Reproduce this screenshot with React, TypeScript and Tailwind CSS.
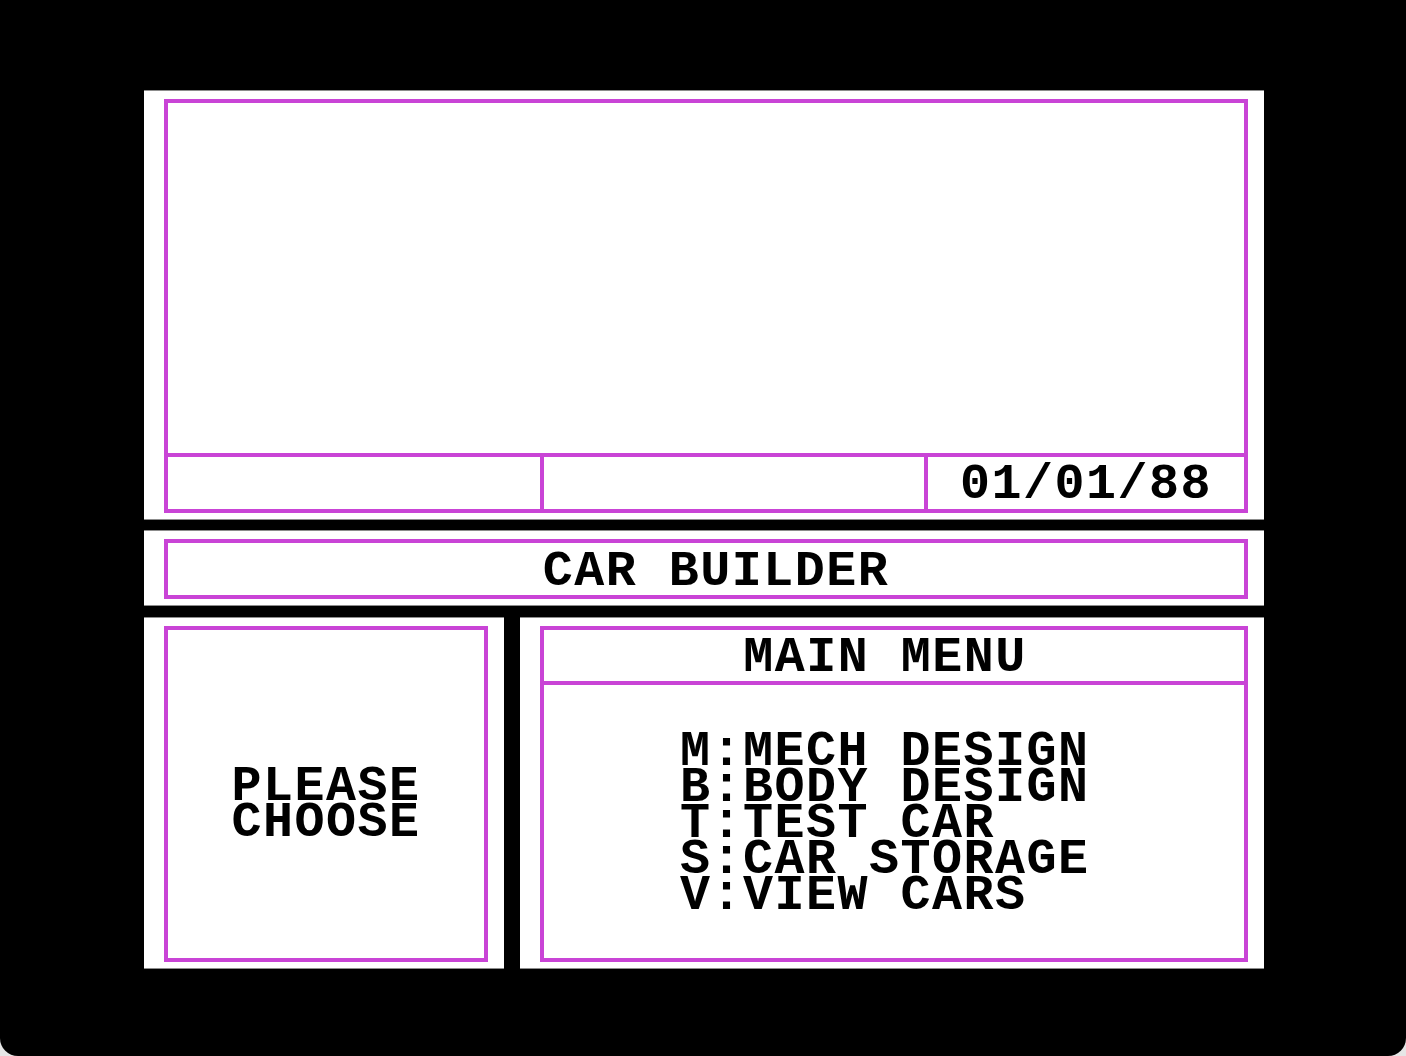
const font = "font-['Liberation_Mono',monospace] font-bold text-[50px] tracking-[1.5px] leading-[36px] text-black uppercase";

const menuItems = [
  ["M", "MECH DESIGN"],
  ["B", "BODY DESIGN"],
  ["T", "TEST CAR"],
  ["S", "CAR STORAGE"],
  ["V", "VIEW CARS"],
];

// white card with the purple frame inset inside it
function Panel({ className = "", frame = "", children }: { className?: string; frame?: string; children?: React.ReactNode }) {
  return (
    <div className={`border-t border-b border-[#8c8c8c] bg-white pt-[8px] pb-[6px] pl-[20px] pr-[16px] ${className}`}>
      <div className={`h-full border-4 border-[#c944d6] ${frame}`}>{children}</div>
    </div>
  );
}

export default function App() {
  return (
    <div className="h-[1056px] w-[1406px] bg-[#e6e6e6]">
      <div className="h-full w-full rounded-b-[18px] bg-black pl-[144px] pt-[90px]">
        <div className="flex w-[1120px] flex-col">
          {/* monitor area with status strip */}
          <Panel className="h-[430px]" frame="flex flex-col">
            <div className="flex-1" />
            <div className="flex h-[56px] border-t-4 border-[#c944d6]">
              <div className="w-[376px] border-r-4 border-[#c944d6]" />
              <div className="w-[384px] border-r-4 border-[#c944d6]" />
              <div className={`flex flex-1 items-center pl-[32px] pt-[4px] ${font}`}>01/01/88</div>
            </div>
          </Panel>

          <div className="h-[10px]" />

          <Panel className="h-[76px]" frame="flex items-center justify-center">
            <div className={`pl-[20px] pt-[6px] whitespace-pre ${font}`}>CAR BUILDER</div>
          </Panel>

          <div className="h-[11px]" />

          <div className="flex h-[352px] gap-[16px]">
            <Panel className="w-[360px]" frame="flex items-center justify-center">
              <div className={`pt-[22px] ${font}`}>
                <div>PLEASE</div>
                <div>CHOOSE</div>
              </div>
            </Panel>
            <Panel className="flex-1" frame="flex flex-col">
              <div className={`flex h-[55px] items-center justify-center border-b-4 border-[#c944d6] whitespace-pre ${font}`}>
                <span className="pr-[18px] pt-[4px]">MAIN MENU</span>
              </div>
              <div className={`pl-[136px] pt-[49px] ${font} leading-[36.5px]`}>
                {menuItems.map(([key, label]) => (
                  <div key={key} className="whitespace-pre">
                    {key}:{label}
                  </div>
                ))}
              </div>
            </Panel>
          </div>
        </div>
      </div>
    </div>
  );
}
